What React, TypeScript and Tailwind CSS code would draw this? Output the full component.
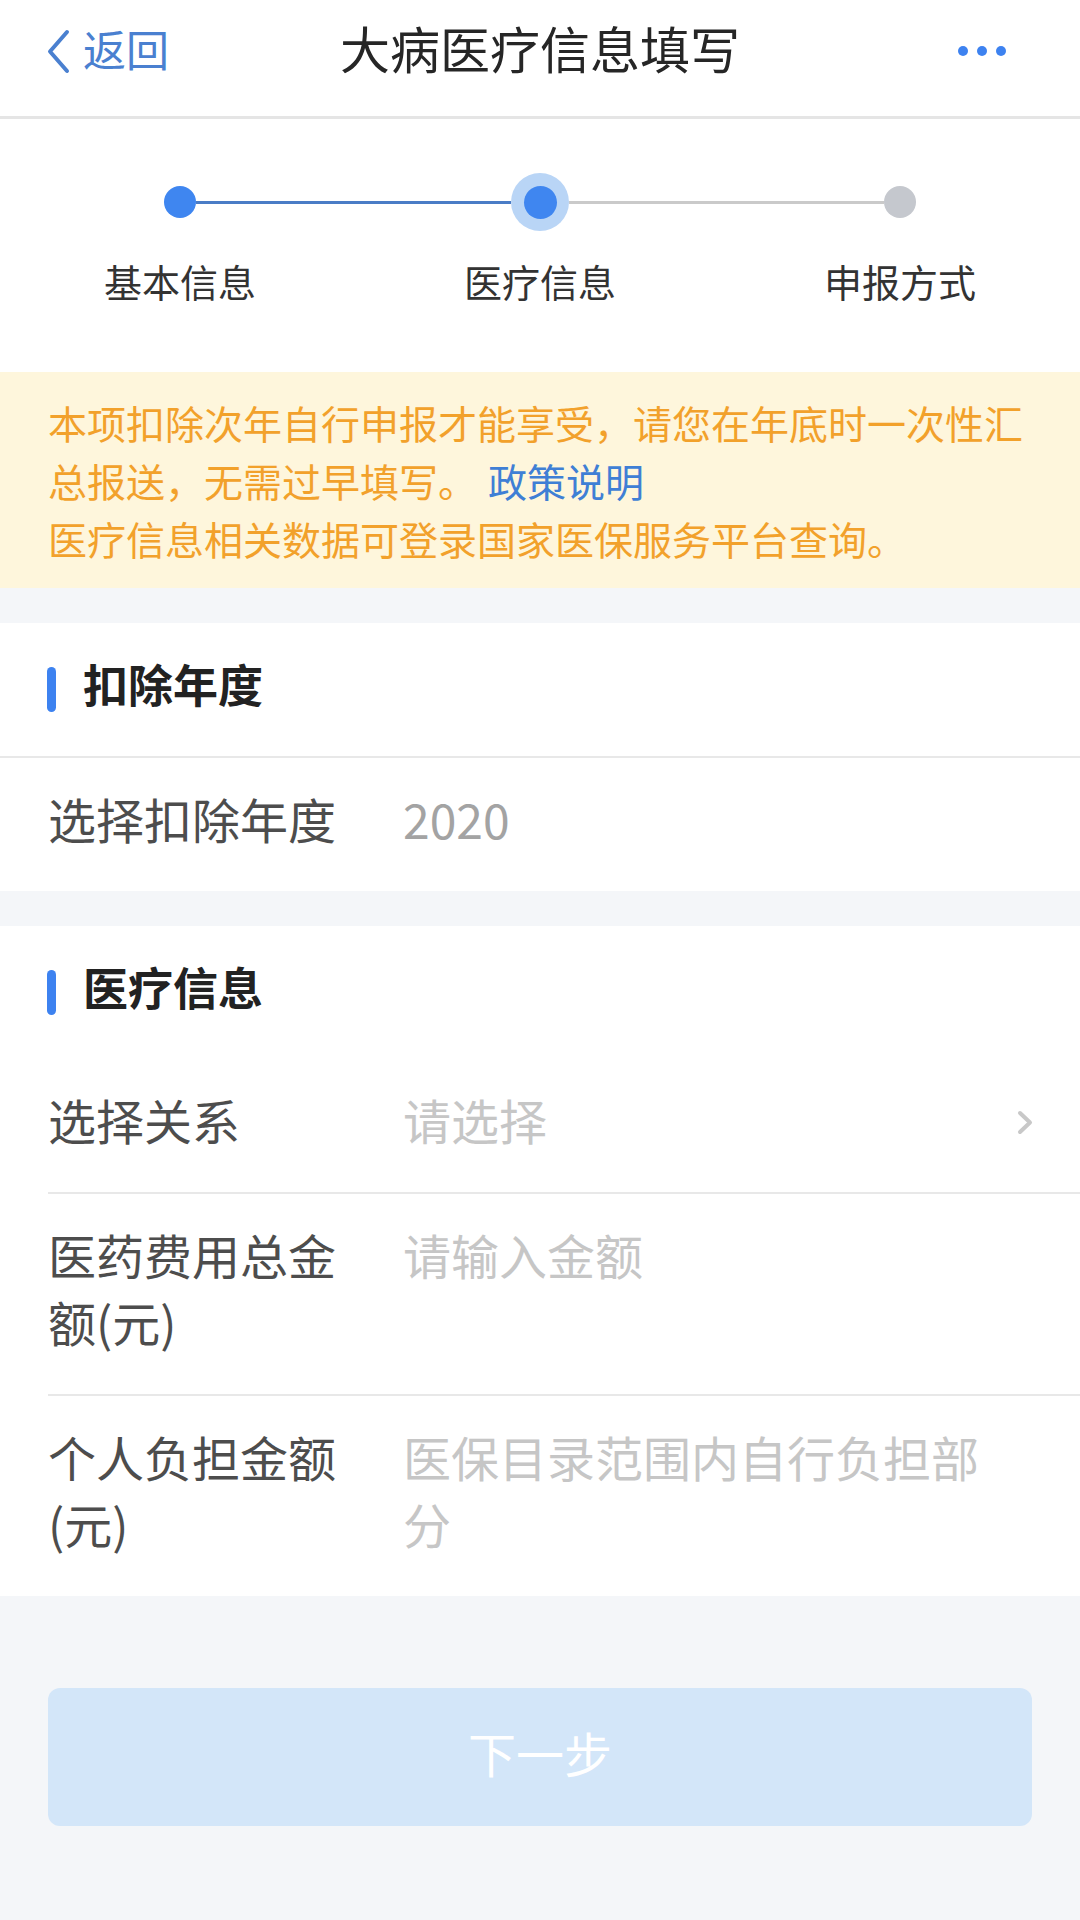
import React from "react";

function Step({ label }: { label: string }) {
  return <div className="text-center text-[38px] leading-[50px] text-[#333]">{label}</div>;
}

function SectionTitle({ title }: { title: string }) {
  return (
    <div className="h-[133px] flex items-center pl-[47px]">
      <span className="w-[9px] h-[45px] rounded-full bg-[#3d82f0]" />
      <span className="ml-[27px] mb-[12px] text-[45px] font-bold text-[#222]">{title}</span>
    </div>
  );
}

function Row({
  label,
  value,
  valueClass,
  arrow,
}: {
  label: string;
  value: string;
  valueClass: string;
  arrow?: boolean;
}) {
  return (
    <div className="flex items-start px-[48px] pt-[27px] pb-[39px] text-[48px] leading-[67px]">
      <div className="w-[296px] shrink-0 text-[#4d4d4d]">{label}</div>
      <div className={`ml-[59px] flex-1 pr-[40px] ${valueClass}`}>{value}</div>
      {arrow && (
        <svg width="20" height="67" viewBox="0 0 20 67" className="shrink-0 -mr-[2px]">
          <polyline
            points="6,27 16,36.5 6,46"
            fill="none"
            stroke="#c8c8c8"
            strokeWidth="4"
            strokeLinecap="round"
            strokeLinejoin="round"
          />
        </svg>
      )}
    </div>
  );
}

export default function App() {
  return (
    <div className="w-[1080px] min-h-[1920px] bg-[#f4f6f9] font-['Noto_Sans_CJK_SC','Noto_Sans',sans-serif]">
      {/* Nav bar */}
      <header className="h-[119px] bg-white border-b-[3px] border-[#e5e5e5] grid grid-cols-[1fr_auto_1fr] items-center pb-[14px]">
        <div className="flex items-center pl-[45px]">
          <svg width="25" height="45" viewBox="0 0 25 45">
            <polyline
              points="22,3 5,22.5 22,42"
              fill="none"
              stroke="#4a80d0"
              strokeWidth="4"
              strokeLinecap="round"
              strokeLinejoin="round"
            />
          </svg>
          <span className="ml-[13px] mb-[6px] text-[43px] text-[#4a80d0]">返回</span>
        </div>
        <h1 className="mb-[8px] text-[50px] text-[#262626]">大病医疗信息填写</h1>
        <div className="flex justify-end items-center gap-[9px] pr-[74px]">
          <span className="w-[10px] h-[10px] rounded-full bg-[#3d82f0]" />
          <span className="w-[10px] h-[10px] rounded-full bg-[#3d82f0]" />
          <span className="w-[10px] h-[10px] rounded-full bg-[#3d82f0]" />
        </div>
      </header>

      {/* Steps */}
      <section className="bg-white h-[253px] pt-[54px]">
        <div className="flex items-center px-[164px] h-[58px]">
          <span className="w-[32px] h-[32px] rounded-full bg-[#3f86f0] shrink-0" />
          <span className="flex-1 h-[3px] bg-[#4a7cc6]" />
          <span className="w-[58px] h-[58px] rounded-full bg-[#b9d5f6] flex items-center justify-center shrink-0">
            <span className="w-[33px] h-[33px] rounded-full bg-[#3f86f0]" />
          </span>
          <span className="flex-1 h-[3px] bg-[#cacaca]" />
          <span className="w-[32px] h-[32px] rounded-full bg-[#c5c8ce] shrink-0" />
        </div>
        <div className="grid grid-cols-3 mt-[25px]">
          <Step label="基本信息" />
          <Step label="医疗信息" />
          <Step label="申报方式" />
        </div>
      </section>

      {/* Notice */}
      <section className="bg-[#fef6dc] px-[48px] py-[21px] text-[39px] leading-[58px] text-[#f2a12b]">
        <p>本项扣除次年自行申报才能享受，请您在年底时一次性汇</p>
        <p className="flex gap-[11px]">
          <span>总报送，无需过早填写。</span>
          <span className="text-[#3f7fd5]">政策说明</span>
        </p>
        <p>医疗信息相关数据可登录国家医保服务平台查询。</p>
      </section>

      <div className="h-[35px]" />

      {/* Deduction year */}
      <section className="bg-white">
        <SectionTitle title="扣除年度" />
        <div className="h-[2px] bg-[#e8e8e8]" />
        <Row label="选择扣除年度" value="2020" valueClass="text-[#a3a3a3]" />
      </section>

      <div className="h-[35px]" />

      {/* Medical info */}
      <section className="bg-white">
        <SectionTitle title="医疗信息" />
        <Row label="选择关系" value="请选择" valueClass="text-[#c6c6c6]" arrow />
        <div className="ml-[48px] h-[2px] bg-[#e8e8e8]" />
        <Row label="医药费用总金额(元)" value="请输入金额" valueClass="text-[#c6c6c6]" />
        <div className="ml-[48px] h-[2px] bg-[#e8e8e8]" />
        <Row label="个人负担金额(元)" value="医保目录范围内自行负担部分" valueClass="text-[#c6c6c6]" />
      </section>

      {/* Next button */}
      <div className="px-[48px] pt-[92px]">
        <button className="w-full h-[138px] rounded-[12px] bg-[#d3e6f9] text-white text-[48px] pb-[10px]">
          下一步
        </button>
      </div>
    </div>
  );
}
